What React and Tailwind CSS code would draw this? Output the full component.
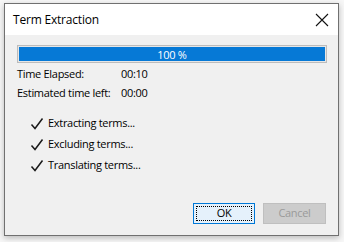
export default function App() {
  const font = { fontFamily: '"Open Sans", "Noto Sans", sans-serif' };
  const Check = () => (
    <svg width="14" height="14" viewBox="0 0 14 14" className="shrink-0">
      <path d="M1.5 7.5 L5 11.5 L12.5 1.5" fill="none" stroke="#1a1a1a" strokeWidth="1.5" strokeLinejoin="miter" />
    </svg>
  );
  return (
    <div className="w-[344px] h-[242px] bg-[#f7f7f7] pt-[3px] pl-[4px] overflow-hidden" style={font}>
      <div className="w-[335px] h-[233px] border border-[#707070] flex flex-col shadow-[0_2px_6px_rgba(0,0,0,0.25)]">
        <div className="h-[31px] bg-white flex items-center justify-between pl-[8px] pr-[8px] shrink-0">
          <span className="text-[12px] tracking-[-0.2px] text-black">Term Extraction</span>
          <svg width="14" height="14" viewBox="0 0 14 14" className="mr-[1px]">
            <path d="M1 1 L13 13 M13 1 L1 13" stroke="#111" strokeWidth="1.1" />
          </svg>
        </div>
        <div className="flex-1 bg-[#f0f0f0] flex flex-col pl-[12px] pr-[10px] pt-[10px] text-[11px] tracking-[-0.3px] text-black">
          <div className="h-[18px] w-[310px] border border-[#bcbcbc] bg-[#e6e6e6] p-px">
            <div className="h-full w-full bg-[#0679d6] flex items-center justify-center text-white leading-none">
              100 %
            </div>
          </div>
          <div className="mt-[2px] flex flex-col">
            <div className="h-[19px] flex items-center">
              <span className="w-[104px]">Time Elapsed:</span>
              <span>00:10</span>
            </div>
            <div className="h-[19px] flex items-center">
              <span className="w-[104px]">Estimated time left:</span>
              <span>00:00</span>
            </div>
          </div>
          <div className="mt-[10px] flex flex-col pl-[13px]">
            {["Extracting terms...", "Excluding terms...", "Translating terms..."].map((t) => (
              <div key={t} className="h-[21px] flex items-center gap-[4px]">
                <Check />
                <span>{t}</span>
              </div>
            ))}
          </div>
          <div className="mt-auto mb-[11px] flex justify-end gap-[8px] pr-[2px]">
            <div className="w-[62px] h-[21px] border border-[#0078d7] bg-[#e5f1fb] p-[2px]">
              <div className="w-full h-full border border-dotted border-black flex items-center justify-center">
                OK
              </div>
            </div>
            <div className="w-[63px] h-[21px] border border-[#bfbfbf] bg-[#cccccc] flex items-center justify-center text-[#9a9a9a]">
              Cancel
            </div>
          </div>
        </div>
      </div>
    </div>
  );
}
